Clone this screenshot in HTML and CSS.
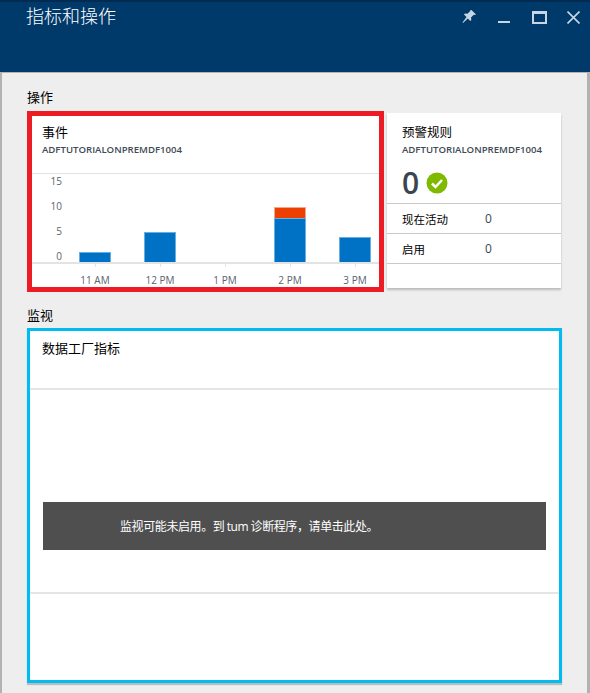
FILE: index.html
```html
<!DOCTYPE html>
<html lang="zh-CN">
<head>
  <meta charset="UTF-8">
  <title>指标和操作</title>
  <link rel="stylesheet" href="styles.css">
</head>
<body>

<div class="blade">
  <header class="blade-header">
    <h1>指标和操作</h1>
    <div class="blade-actions">
      <svg class="icon-pin" width="16" height="16" viewBox="0 0 16 16">
        <path d="M10.500 1l4.500 4.500-1.300.5-.9-.3-2.800 2.800.3 2.500-1 1-2.500-2.500L2 14l-.5-.5L5.500 8 3 5.500l1-1 2.500.3 2.800-2.800-.2-.8z"/>
      </svg>
      <svg class="icon-min" width="12" height="16" viewBox="0 0 12 16">
        <rect y="12" width="12" height="2"/>
      </svg>
      <svg class="icon-max" width="15" height="13" viewBox="0 0 15 13">
        <path d="M0 0h15v13H0zM2 3v8h11V3z" fill-rule="evenodd"/>
      </svg>
      <svg class="icon-close" width="13" height="13" viewBox="0 0 13 13">
        <path d="M.5.500l12 12M12.500.500l-12 12"/>
      </svg>
    </div>
  </header>

  <div class="blade-content">
    <h2 class="section-title">操作</h2>
    <div class="tiles">
      <section class="tile tile-events">
        <div class="tile-head">
          <h3>事件</h3>
          <p class="resource">ADFTUTORIALONPREMDF1004</p>
        </div>
        <svg class="chart" width="347" height="114" viewBox="0 0 347 114">
          <line class="grid" x1="0" y1="0.5" x2="347" y2="0.500"/>
          <g class="y-labels">
            <text x="30" y="12">15</text>
            <text x="30" y="37">10</text>
            <text x="30" y="62">5</text>
            <text x="30" y="87">0</text>
          </g>
          <rect class="bar" x="47.500" y="79.500" width="31" height="11"/>
          <rect class="bar" x="112.500" y="59.500" width="31" height="31"/>
          <rect class="bar-err" x="242.500" y="34.500" width="31" height="11"/>
          <rect class="bar" x="242.500" y="45.500" width="31" height="45"/>
          <rect class="bar" x="307.500" y="64.500" width="31" height="26"/>
          <line class="axis" x1="0" y1="90" x2="347" y2="90"/>
          <g class="ticks">
            <line x1="63.500" y1="91" x2="63.500" y2="94"/>
            <line x1="128.500" y1="91" x2="128.500" y2="94"/>
            <line x1="193.500" y1="91" x2="193.500" y2="94"/>
            <line x1="258.500" y1="91" x2="258.500" y2="94"/>
            <line x1="323.500" y1="91" x2="323.500" y2="94"/>
          </g>
          <g class="x-labels">
            <text x="63" y="111">11 AM</text>
            <text x="128" y="111">12 PM</text>
            <text x="193" y="111">1 PM</text>
            <text x="258" y="111">2 PM</text>
            <text x="323" y="111">3 PM</text>
          </g>
        </svg>
      </section>

      <section class="tile tile-alerts">
        <div class="alerts-head">
          <h3>预警规则</h3>
          <p class="resource">ADFTUTORIALONPREMDF1004</p>
          <div class="alert-count">
            <span class="count">0</span>
            <svg width="22" height="22" viewBox="0 0 22 22">
              <circle cx="11" cy="11" r="10.500" fill="#7fba00"/>
              <path d="M6 11.500l3.500 3.500 6.500-7" fill="none" stroke="#fff" stroke-width="2.500"/>
            </svg>
          </div>
        </div>
        <div class="alert-row"><span class="alert-name">现在活动</span><span>0</span></div>
        <div class="alert-row"><span class="alert-name">启用</span><span>0</span></div>
      </section>
    </div>

    <h2 class="section-title">监视</h2>
    <section class="tile tile-monitor">
      <div class="monitor-head"><h3>数据工厂指标</h3></div>
      <div class="monitor-body">
        <div class="notice">监视可能未启用。到 <span class="latin">tum</span> 诊断程序，请单击此处。</div>
      </div>
    </section>
  </div>
</div>

</body>
</html>
```

FILE: styles.css
```css
html, body {
  margin: 0;
  height: 100%;
}
body {
  font-family: "Open Sans", "Noto Sans CJK SC", sans-serif;
  background-color: #eeeeee;
  color: #000;
  overflow: hidden;
}
h1, h2, h3, p {
  margin: 0;
  font-weight: 400;
}
.blade {
  height: 693px;
  box-sizing: border-box;
  border-left: 2px solid #b2b2b2;
  border-right: 3px solid #b2b2b2;
}
.blade-header {
  height: 70px;
  margin: 0 -3px 0 -2px;
  border-top: 2px solid #012b50;
  border-bottom: 1px solid #b4b4b4;
  background-color: #003a6b;
  display: flex;
  justify-content: space-between;
  align-items: flex-start;
  padding: 0 10px 0 26px;
}
.blade-header h1 {
  font-size: 18px;
  line-height: 26px;
  color: #fff;
  font-family: "Noto Sans CJK SC", sans-serif;
  font-weight: 300;
}
.blade-actions {
  display: flex;
  align-items: flex-start;
  padding-top: 7px;
}
.blade-actions svg {
  display: block;
}
.blade-actions path, .blade-actions rect {
  fill: #c8d6e3;
}
.icon-pin { margin-right: 21px; }
.icon-min { margin-right: 22px; }
.icon-max { margin-right: 20px; margin-top: 2px; }
.icon-close { margin-top: 2px; }
.blade-actions .icon-close path {
  fill: none;
  stroke: #c8d6e3;
  stroke-width: 1.600;
}
.blade-content {
  padding: 15px 26px 0 25px;
}
.section-title {
  font-size: 13px;
  line-height: 18px;
  margin-bottom: 4px;
  font-family: "Noto Sans CJK SC", sans-serif;
}
.tiles {
  display: flex;
  align-items: flex-start;
  height: 195px;
  margin-top: 5px;
}
.tile {
  background-color: #fff;
  box-sizing: border-box;
}
.tile h3 {
  font-size: 13px;
  line-height: 16px;
  font-family: "Noto Sans CJK SC", sans-serif;
}
.resource {
  font-size: 9.600px;
  line-height: 14px;
  font-weight: 600;
  color: #3f4a54;
  margin-top: 3px;
}
.tile-events {
  width: 357px;
  height: 181px;
  border: 5px solid #ed1c24;
}
.tile-head {
  height: 57px;
  box-sizing: border-box;
  padding: 8px 10px 0;
}
.chart {
  display: block;
}
.grid, .axis, .ticks line {
  stroke: #e3e3e3;
}
.axis {
  stroke-width: 2;
}
.bar {
  fill: #0072c6;
  stroke: #6aaee0;
}
.bar-err {
  fill: #ec3f00;
  stroke: #f4a78c;
}
.y-labels text, .x-labels text {
  font-size: 10px;
  fill: #59636c;
}
.y-labels text { text-anchor: end; }
.x-labels text { text-anchor: middle; }
.tile-alerts {
  width: 175px;
  height: 175px;
  margin: 2px 0 0 3px;
  box-shadow: 0 2px 2px #bbb;
}
.tile-alerts h3 {
  font-size: 12.500px;
}
.alerts-head {
  height: 90px;
  box-sizing: border-box;
  padding: 11px 0 0 15px;
}
.alert-count {
  display: flex;
  align-items: center;
  gap: 7px;
  margin-top: 8px;
}
.count {
  font-size: 30px;
  line-height: 36px;
  font-weight: 600;
  color: #3a4550;
}
.alert-row {
  height: 30px;
  box-sizing: border-box;
  border-top: 1px solid #c9c9c9;
  display: flex;
  align-items: center;
  padding-left: 15px;
  font-size: 12px;
  color: #3a4550;
}
.alert-row:last-child {
  border-bottom: 1px solid #c9c9c9;
  height: 31px;
}
.alert-name {
  width: 83px;
  color: #000;
  font-size: 11.500px;
  font-family: "Noto Sans CJK SC", sans-serif;
}
.tile-monitor {
  width: 535px;
  height: 355px;
  border: 3px solid #00bcf2;
  box-shadow: 0 2px 1px #bbb;
}
.monitor-head {
  height: 59px;
  padding: 9px 12px 0;
  box-sizing: border-box;
  border-bottom: 2px solid #e5e5e5;
}
.monitor-body {
  height: 204px;
  box-sizing: border-box;
  border-bottom: 2px solid #e5e5e5;
  padding: 112px 13px 0;
}
.notice {
  height: 48px;
  line-height: 47px;
  background-color: #4f4f4f;
  color: #fff;
  font-size: 12px;
  letter-spacing: -0.4px;
  padding-left: 77px;
  font-family: "Noto Sans CJK SC", sans-serif;
}
.notice .latin {
  font-family: "Open Sans", sans-serif;
}
```
